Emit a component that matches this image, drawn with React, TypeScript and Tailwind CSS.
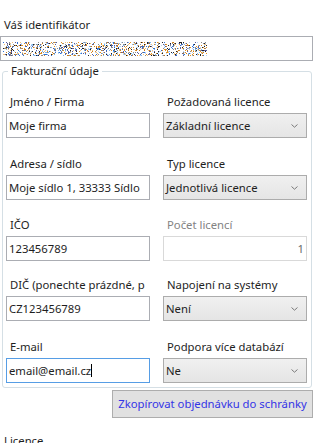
import React from "react";

// scrambled pixels that hide the identifier value
function Noise() {
  let seed = 11;
  const rand = () => {
    seed = (seed * 16807) % 2147483647;
    return seed / 2147483647;
  };
  const colors = ["#2f6fd0", "#e3901f", "#222222", "#79b6f2", "#c77a1c", "#8c8c8c", "#b9d4f3", "#f2c27b", "#5a5a9a"];
  const dots = [];
  for (let i = 0; i < 1300; i++) {
    const x = Math.floor(rand() * 204);
    const y = 2 + Math.floor(rand() * 14);
    const c = colors[Math.floor(rand() * colors.length)];
    dots.push(<rect key={i} x={x} y={y} width={1} height={1} fill={c} />);
  }
  return (
    <svg width="204" height="18" className="block">
      {dots}
    </svg>
  );
}

const Chevron = () => (
  <svg width="7" height="4" viewBox="0 0 7 4" className="block">
    <path d="M0.5 0.5 L3.5 3.2 L6.5 0.5" fill="none" stroke="#7a7a7a" strokeWidth="1" />
  </svg>
);

interface FieldProps {
  label: string;
  disabled?: boolean;
  children: React.ReactNode;
}

const Field = ({ label, disabled, children }: FieldProps) => (
  <div className="flex flex-col min-w-0">
    <div
      className={`pl-1 h-[16px] leading-[16px] whitespace-nowrap overflow-hidden ${
        disabled ? "text-[#838383]" : "text-[#1e1e1e]"
      }`}
    >
      {label}
    </div>
    <div className="mt-[3px]">{children}</div>
  </div>
);

interface TextBoxProps {
  value: string;
  focused?: boolean;
  disabled?: boolean;
}

const TextBox = ({ value, focused, disabled }: TextBoxProps) => (
  <div
    className={`h-[25px] border bg-white flex items-center px-[2px] overflow-hidden ${
      focused ? "border-[#569de5]" : disabled ? "border-[#d9d9d9]" : "border-[#abadb3]"
    } ${disabled ? "justify-end text-[#6d6d6d]" : "text-[#1e1e1e]"}`}
  >
    <span className="whitespace-nowrap leading-[16px]">{value}</span>
    {focused && <span className="w-px h-[13px] bg-black" />}
  </div>
);

const ComboBox = ({ value }: { value: string }) => (
  <div className="h-[25px] border border-[#acacac] bg-gradient-to-b from-[#f0f0f0] to-[#e5e5e5] flex items-center justify-between pl-[2px] pr-[8px]">
    <span className="whitespace-nowrap leading-[16px] text-[#1e1e1e]">{value}</span>
    <Chevron />
  </div>
);

export default function App() {
  return (
    <div className="w-[320px] h-[443px] overflow-hidden bg-white text-[11.3px] text-[#1e1e1e] font-['Noto_Sans',sans-serif]">
      <div className="w-[313px] flex flex-col">
        <div className="pl-1 pt-[17px] h-[33px] leading-[16px]">Váš identifikátor</div>
        <div className="mt-[3px] h-[25px] border border-[#abadb3] flex items-center pl-[2px]">
          <Noise />
        </div>

        <fieldset className="mt-[2px] ml-[2px] w-[310px] border border-[#d5dfe5] rounded-[3px] pl-[3px] pr-[3px] pt-[15px] pb-[4px]">
          <legend className="ml-[2px] px-[3px] leading-[16px]">Fakturační údaje</legend>
          <div className="grid grid-cols-[144px_144px] gap-x-[13px]">
            <Field label="Jméno / Firma">
              <TextBox value="Moje firma" />
            </Field>
            <Field label="Požadovaná licence">
              <ComboBox value="Základní licence" />
            </Field>

            <div className="col-span-2 h-[18px]" />
            <Field label="Adresa / sídlo">
              <TextBox value="Moje sídlo 1, 33333 Sídlo" />
            </Field>
            <Field label="Typ licence">
              <ComboBox value="Jednotlivá licence" />
            </Field>

            <div className="col-span-2 h-[17px]" />
            <Field label="IČO">
              <TextBox value="123456789" />
            </Field>
            <Field label="Počet licencí" disabled>
              <TextBox value="1" disabled />
            </Field>

            <div className="col-span-2 h-[16px]" />
            <Field label="DIČ (ponechte prázdné, p">
              <TextBox value="CZ123456789" />
            </Field>
            <Field label="Napojení na systémy">
              <ComboBox value="Není" />
            </Field>

            <div className="col-span-2 h-[18px]" />
            <Field label="E-mail">
              <TextBox value="email@email.cz" focused />
            </Field>
            <Field label="Podpora více databází">
              <ComboBox value="Ne" />
            </Field>
          </div>
        </fieldset>

        <button className="mt-[2px] ml-[112px] w-[201px] h-[28px] border border-[#adadad] bg-[#e1e1e1] text-[#3434e6] leading-[16px] whitespace-nowrap">
          Zkopírovat objednávku do schránky
        </button>

        <div className="pl-1 mt-[15px] leading-[16px]">Licence</div>
      </div>
    </div>
  );
}
